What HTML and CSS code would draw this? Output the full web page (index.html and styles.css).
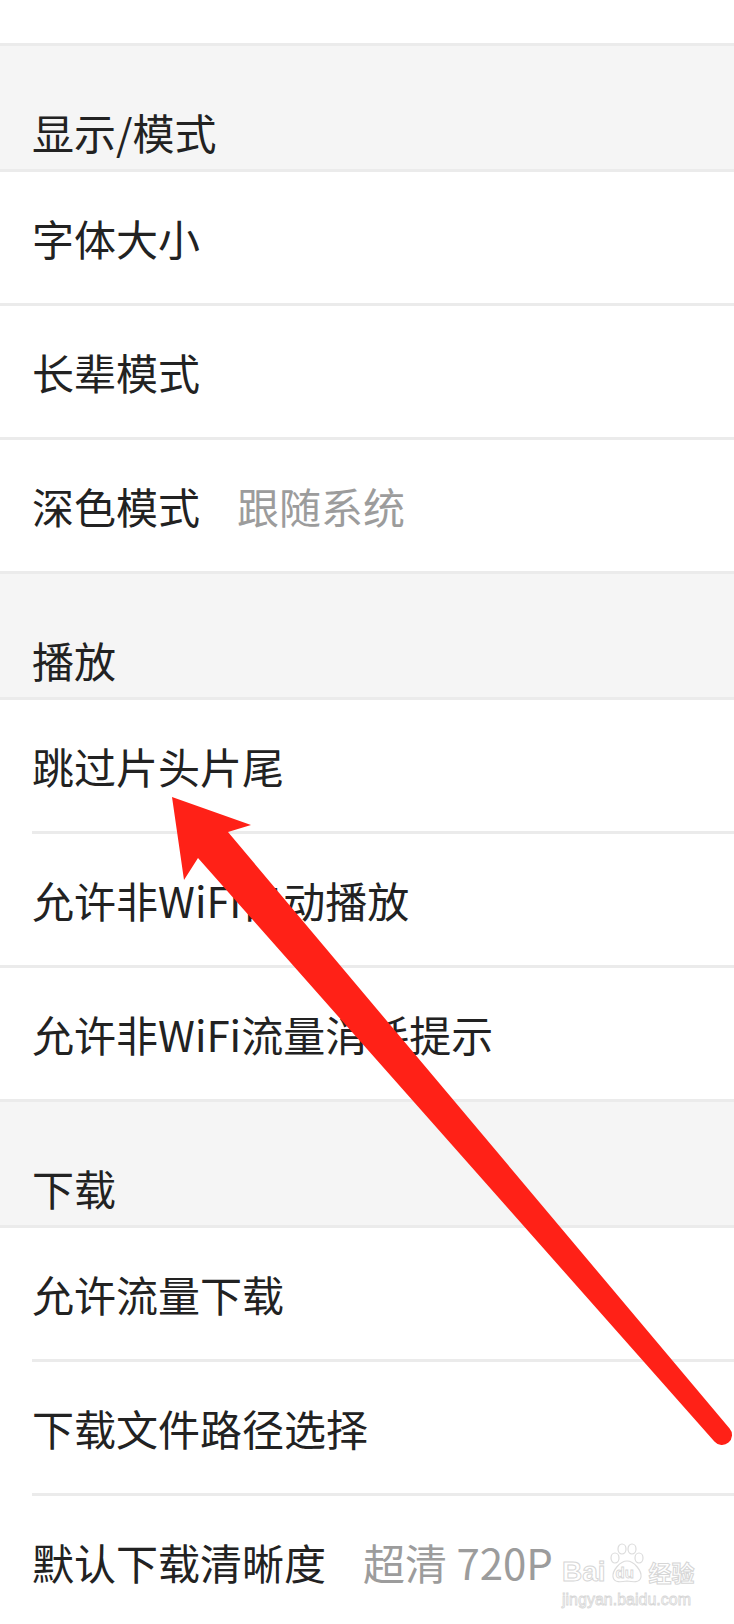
FILE: index.html
```html
<!DOCTYPE html>
<html lang="zh-CN">
<head>
    <meta charset="UTF-8">
    <meta name="viewport" content="width=device-width, initial-scale=1.0">
    <title>设置</title>
    <link rel="stylesheet" href="styles.css">
</head>
<body>

    <div class="settings">
        <div class="top-row"></div>

        <div class="group-title">显示/模式</div>
        <div class="item item-full"><div class="item-inner">字体大小</div></div>
        <div class="item item-full"><div class="item-inner">长辈模式</div></div>
        <div class="item item-full"><div class="item-inner">深色模式<span class="item-value">跟随系统</span></div></div>

        <div class="group-title">播放</div>
        <div class="item item-inset"><div class="item-inner">跳过片头片尾</div></div>
        <div class="item item-full"><div class="item-inner">允许非WiFi自动播放</div></div>
        <div class="item item-full"><div class="item-inner">允许非WiFi流量消耗提示</div></div>

        <div class="group-title">下载</div>
        <div class="item item-inset"><div class="item-inner">允许流量下载</div></div>
        <div class="item item-inset"><div class="item-inner">下载文件路径选择</div></div>
        <div class="item item-last"><div class="item-inner">默认下载清晰度<span class="item-value">超清 720P</span></div></div>
    </div>

    <!-- red annotation arrow drawn over the list -->
    <svg class="arrow" width="734" height="1624" viewBox="0 0 734 1624">
        <path d="M172,797 L251,825 L228,832 L729.6,1428.5 A10,10 0 0 1 714.4,1441.5 L198,858 L184,880 Z" fill="#ff2117"/>
    </svg>

    <div class="watermark">
        <div class="wm-logo">
            <span class="wm-bai">Bai</span>
            <span class="wm-paw">
                <svg width="40" height="42" viewBox="0 0 40 42">
                    <ellipse cx="8" cy="15" rx="4" ry="5" fill="#fff" stroke="#dcdcdc" stroke-width="1.2"/>
                    <ellipse cx="15" cy="6" rx="4" ry="5" fill="#fff" stroke="#dcdcdc" stroke-width="1.2"/>
                    <ellipse cx="25" cy="6" rx="4" ry="5" fill="#fff" stroke="#dcdcdc" stroke-width="1.2"/>
                    <ellipse cx="32" cy="15" rx="4" ry="5" fill="#fff" stroke="#dcdcdc" stroke-width="1.2"/>
                    <path d="M20,18 C27,18 35,28 34,34 C33,40 26,39 20,38 C14,39 7,40 6,34 C5,28 13,18 20,18 Z" fill="#fff" stroke="#dcdcdc" stroke-width="1.2"/>
                </svg>
                <span class="wm-du">du</span>
            </span>
            <span class="wm-jy">经验</span>
        </div>
        <div class="wm-url">jingyan.baidu.com</div>
    </div>

</body>
</html>
```

FILE: styles.css
```css
body {
    margin: 0;
    background-color: #fff;
    font-family: "Noto Sans CJK SC", "Noto Sans", sans-serif;
    color: #222;
    position: relative;
    height: 1624px;
    overflow: hidden;
}

.settings {
    display: flex;
    flex-direction: column;
}

.top-row {
    height: 43px;
    border-bottom: 3px solid #ebebeb;
}

.group-title {
    height: 126px;
    box-sizing: border-box;
    background-color: #f5f5f5;
    border-bottom: 3px solid #ebebeb;
    padding: 0 0 16px 32px;
    display: flex;
    align-items: flex-end;
    font-size: 42px;
    line-height: 42px;
}

.item {
    padding-left: 32px;
    font-size: 42px;
    line-height: 42px;
}

.item-inner {
    height: 131px;
    display: flex;
    align-items: center;
}

.item-full {
    border-bottom: 3px solid #ebebeb;
}

.item-inset .item-inner {
    border-bottom: 3px solid #ebebeb;
}

.item-value {
    color: #9c9c9c;
    margin-left: 37px;
}

.arrow {
    position: absolute;
    top: 0;
    left: 0;
    pointer-events: none;
}

.watermark {
    position: absolute;
    left: 562px;
    top: 1543px;
    font-family: "Liberation Sans", Arial, sans-serif;
    color: #fff;
}

.wm-logo {
    display: flex;
    align-items: flex-end;
}

.wm-bai {
    font-size: 28px;
    line-height: 26px;
    font-weight: bold;
    -webkit-text-stroke: 1px #d6d6d6;
}

.wm-paw {
    position: relative;
    width: 40px;
    height: 42px;
    margin-left: 1px;
}

.wm-du {
    position: absolute;
    left: 9px;
    top: 22px;
    font-size: 15px;
    line-height: 15px;
    font-weight: bold;
    -webkit-text-stroke: 0.8px #d6d6d6;
}

.wm-jy {
    font-family: "Noto Sans CJK SC", sans-serif;
    font-size: 23px;
    line-height: 26px;
    font-weight: bold;
    -webkit-text-stroke: 1px #d6d6d6;
    margin-left: 2px;
}

.wm-url {
    font-size: 16px;
    line-height: 18px;
    margin-top: 6px;
    -webkit-text-stroke: 0.8px #d6d6d6;
}
```
